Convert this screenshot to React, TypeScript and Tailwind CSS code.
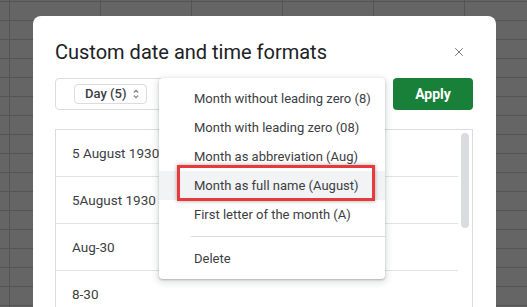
import { X } from "lucide-react";

const menuItems = [
  "Month without leading zero (8)",
  "Month with leading zero (08)",
  "Month as abbreviation (Aug)",
  "Month as full name (August)",
  "First letter of the month (A)",
];

const rows = ["5 August 1930", "5August 1930", "Aug-30", "8-30"];

const UpDown = () => (
  <svg width="8" height="12" viewBox="0 0 8 12" fill="none" stroke="#80868b" strokeWidth="1.1">
    <path d="M1.8 4.5 L4 2.3 L6.2 4.5" />
    <path d="M1.8 7.5 L4 9.7 L6.2 7.5" />
  </svg>
);

export default function App() {
  return (
    <div
      className="relative h-[307px] w-[527px] overflow-hidden bg-[#656565] bg-[linear-gradient(to_right,#545454_1px,transparent_1px),linear-gradient(to_bottom,#545454_1px,transparent_1px)] bg-[size:91px_19px] bg-[position:9px_1px] font-['Roboto',sans-serif]"
    >
      {/* dialog */}
      <div className="ml-[33px] mt-[16px] flex h-[320px] w-[463px] flex-col rounded-t-[8px] bg-white pl-[22px] pr-[23px]">
        <div className="mt-[22px] flex h-[28px] items-center justify-between">
          <h1 className="text-[20px] leading-[28px] text-[#202124]">Custom date and time formats</h1>
          <button className="mr-[2px] flex h-[24px] w-[24px] items-center justify-center text-[#5f6368]">
            <X size={14} strokeWidth={1.5} />
          </button>
        </div>

        <div className="mt-[12px] flex h-[32px] items-stretch gap-[13px]">
          <div className="flex flex-1 items-center rounded-[4px] border border-[#dadce0] pl-[18px]">
            <div className="flex h-[20px] items-center gap-[6px] rounded-[4px] border border-[#dadce0] pl-[10px] pr-[6px] text-[13px] font-medium text-[#3c4043]">
              Day (5)
              <UpDown />
            </div>
          </div>
          <button className="w-[80px] rounded-[4px] bg-[#188038] text-[14px] font-bold text-white">
            Apply
          </button>
        </div>

        <div className="relative mt-[19px] flex-1 border border-[#dadce0] pr-[14px]">
          {rows.map((r) => (
            <div
              key={r}
              className="flex h-[47px] items-center border-b border-[#e3e3e3] pl-[16px] text-[13.5px] text-[#3c4043]"
            >
              {r}
            </div>
          ))}
          <div className="absolute right-[3px] top-[3px] h-[95px] w-[8px] rounded-full bg-[#dadce0]" />
        </div>
      </div>

      {/* dropdown menu */}
      <div className="absolute left-[159px] top-[78px] w-[226px] rounded-[4px] bg-white py-[6px] shadow-[0_2px_6px_2px_rgba(60,64,67,0.15),0_1px_2px_rgba(60,64,67,0.3)]">
        {menuItems.map((m, i) => (
          <div
            key={m}
            className={`flex h-[29px] items-center pl-[35px] text-[13px] text-[#3c4043] ${i === 3 ? "bg-[#f1f3f4]" : ""}`}
          >
            {m}
          </div>
        ))}
        <div className="my-[7px] ml-[32px] h-px bg-[#dadce0]" />
        <div className="flex h-[29px] items-center pl-[35px] text-[13px] text-[#3c4043]">Delete</div>
      </div>

      {/* highlight annotation */}
      <div className="absolute left-[177px] top-[165px] h-[36px] w-[198px] border-[3px] border-[#e8393b] shadow-[0_0_4px_rgba(0,0,0,0.35)]" />
    </div>
  );
}
